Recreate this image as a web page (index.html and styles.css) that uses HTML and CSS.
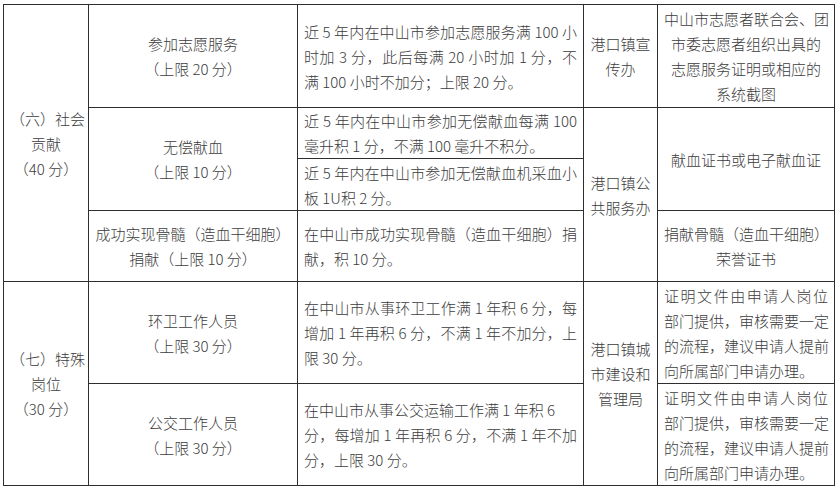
FILE: index.html
```html
<!DOCTYPE html>
<html lang="zh-CN">
<head>
<meta charset="utf-8">
<link rel="stylesheet" href="styles.css">
</head>
<body>
<table class="grid">
  <colgroup>
    <col class="c1"><col class="c2"><col class="c3"><col class="c4"><col class="c5">
  </colgroup>
  <tr class="ra">
    <td rowspan="4" class="ctr"><span class="l">（六）社会</span><span class="l">贡献</span><span class="l">（40 分）</span></td>
    <td class="ctr"><span class="l">参加志愿服务</span><span class="l">（上限 20 分）</span></td>
    <td class="txt"><span class="l j">近 5 年内在中山市参加志愿服务满 100 小</span><span class="l j">时加 3 分，此后每满 20 小时加 1 分，不</span><span class="l">满 100 小时不加分；上限 20 分。</span></td>
    <td class="ctr"><span class="l">港口镇宣</span><span class="l">传办</span></td>
    <td class="ctr"><span class="l">中山市志愿者联合会、团</span><span class="l">市委志愿者组织出具的</span><span class="l">志愿服务证明或相应的</span><span class="l">系统截图</span></td>
  </tr>
  <tr class="rb1">
    <td rowspan="2" class="ctr"><span class="l">无偿献血</span><span class="l">（上限 10 分）</span></td>
    <td class="txt"><span class="l j">近 5 年内在中山市参加无偿献血每满 100</span><span class="l">毫升积 1 分，不满 100 毫升不积分。</span></td>
    <td rowspan="3" class="ctr"><span class="l">港口镇公</span><span class="l">共服务办</span></td>
    <td rowspan="2" class="ctr"><span class="l">献血证书或电子献血证</span></td>
  </tr>
  <tr class="rb2">
    <td class="txt"><span class="l j">近 5 年内在中山市参加无偿献血机采血小</span><span class="l">板 1U积 2 分。</span></td>
  </tr>
  <tr class="rc">
    <td class="ctr"><span class="l">成功实现骨髓（造血干细胞）</span><span class="l">捐献（上限 10 分）</span></td>
    <td class="txt"><span class="l j">在中山市成功实现骨髓（造血干细胞）捐</span><span class="l">献，积 10 分。</span></td>
    <td class="ctr"><span class="l">捐献骨髓（造血干细胞）</span><span class="l">荣誉证书</span></td>
  </tr>
  <tr class="rd">
    <td rowspan="2" class="ctr"><span class="l">（七）特殊</span><span class="l">岗位</span><span class="l">（30 分）</span></td>
    <td class="ctr"><span class="l">环卫工作人员</span><span class="l">（上限 30 分）</span></td>
    <td class="txt"><span class="l j">在中山市从事环卫工作满 1 年积 6 分，每</span><span class="l j">增加 1 年再积 6 分，不满 1 年不加分，上</span><span class="l">限 30 分。</span></td>
    <td rowspan="2" class="ctr dept"><span class="l">港口镇城</span><span class="l">市建设和</span><span class="l">管理局</span></td>
    <td class="txt"><span class="l j">证明文件由申请人岗位</span><span class="l j">部门提供，审核需要一定</span><span class="l j">的流程，建议申请人提前</span><span class="l">向所属部门申请办理。</span></td>
  </tr>
  <tr class="re">
    <td class="ctr"><span class="l">公交工作人员</span><span class="l">（上限 30 分）</span></td>
    <td class="txt"><span class="l">在中山市从事公交运输工作满 1 年积 6</span><span class="l j">分，每增加 1 年再积 6 分，不满 1 年不加</span><span class="l">分，上限 30 分。</span></td>
    <td class="txt"><span class="l j">证明文件由申请人岗位</span><span class="l j">部门提供，审核需要一定</span><span class="l j">的流程，建议申请人提前</span><span class="l">向所属部门申请办理。</span></td>
  </tr>
</table>
</body>
</html>
```
FILE: styles.css
```css
html, body {
  margin: 0;
  background: #ffffff;
}
body {
  padding: 4px 3px 0 3px;
  font-family: "Noto Sans CJK SC", "Noto Sans", sans-serif;
  font-size: 15px;
  font-weight: 300;
  color: #3c3c3c;
}
.grid {
  border-collapse: collapse;
  table-layout: fixed;
  width: 831px;
}
.c1 { width: 85px; }
.c2 { width: 209px; }
.c3 { width: 286px; }
.c4 { width: 74px; }
.c5 { width: 177px; }
.grid td {
  border: 1px solid #2e2e2e;
  padding: 0 6px;
  vertical-align: middle;
  line-height: 25px;
  overflow: hidden;
}
.ra { height: 103px; }
.rb1 { height: 51px; }
.rb2 { height: 52px; }
.rc { height: 71px; }
.rd { height: 102px; }
.re { height: 102px; }
.l {
  display: block;
  white-space: nowrap;
}
.ctr { text-align: center; }
.txt { text-align: left; }
.j {
  text-align: justify;
  text-align-last: justify;
}
.grid td.dept { padding-bottom: 20px; }
```
